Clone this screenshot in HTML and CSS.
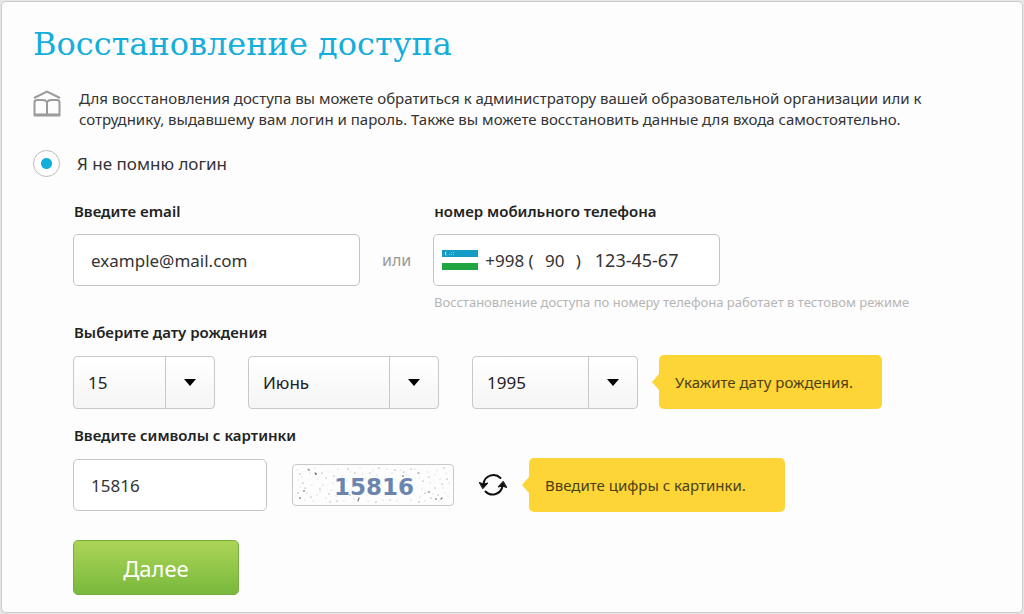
FILE: index.html
```html
<!DOCTYPE html>
<html lang="ru">
<head>
    <meta charset="UTF-8">
    <meta name="viewport" content="width=device-width, initial-scale=1.0">
    <title>Восстановление доступа</title>
    <link rel="stylesheet" href="styles.css">
</head>
<body>
    <main class="card">
        <h1>Восстановление доступа</h1>

        <div class="intro">
            <svg class="logo" viewBox="0 0 28 28" fill="none" stroke="#999b9d" stroke-width="2">
                <path d="M1 8L14 1.500L27 8"/>
                <path d="M14 12Q12.500 10 10 10H4Q1.500 10 1.500 12.500V26M14 12Q15.500 10 18 10h6q2.500 0 2.500 2.500V26M14 12V26"/>
                <path d="M1 25H27" stroke-width="3"/>
            </svg>
            <p>Для восстановления доступа вы можете обратиться к администратору вашей образовательной организации или к сотруднику, выдавшему вам логин и пароль. Также вы можете восстановить данные для входа самостоятельно.</p>
        </div>

        <form>
            <label class="choice">
                <input type="radio" name="reason" checked>
                Я не помню логин
            </label>

            <div class="fields">
                <div class="row contacts">
                    <div class="field">
                        <label class="title" for="email">Введите email</label>
                        <input class="box email" type="email" id="email" value="example@mail.com">
                    </div>
                    <span class="or">или</span>
                    <div class="field">
                        <label class="title" for="phone">номер мобильного телефона</label>
                        <div class="box phone">
                            <svg class="flag" viewBox="0 0 36 20">
                                <path fill="#fff" d="M0 0h36v20H0z"/>
                                <path fill="#169ac6" d="M0 0h36v7H0z"/>
                                <path fill="#1fa640" d="M0 13h36v7H0z"/>
                                <path fill="#d9f2fb" d="M5 1.500a2 2 0 1 0 0 4a2.400 2.400 0 0 1 0-4z"/>
                                <path fill="#7cc8e2" d="M7 4h1v1H7zM9 2h1v1H9zM9 4h1v1H9zM11 2h1v1h-1zM11 4h1v1h-1z"/>
                            </svg>
                            <span>+998 (</span>
                            <input class="code" type="text" aria-label="Код оператора" value="90">
                            <span>)</span>
                            <input class="number" type="tel" id="phone" value="123-45-67">
                        </div>
                    </div>
                </div>
                <p class="hint">Восстановление доступа по номеру телефона работает в тестовом режиме</p>

                <label class="title" for="day">Выберите дату рождения</label>
                <div class="row dates">
                    <div class="select day">
                        <select id="day"><option>15</option></select>
                        <span class="arrow"></span>
                    </div>
                    <div class="select month">
                        <select aria-label="Месяц"><option>Июнь</option></select>
                        <span class="arrow"></span>
                    </div>
                    <div class="select year">
                        <select aria-label="Год"><option>1995</option></select>
                        <span class="arrow"></span>
                    </div>
                    <div class="tip">Укажите дату рождения.</div>
                </div>

                <label class="title" for="captcha">Введите символы с картинки</label>
                <div class="row check">
                    <input class="box answer" type="text" id="captcha" value="15816">
                    <svg class="captcha" viewBox="0 0 160 40">
                        <g fill="none" stroke-linecap="round">
                            <path stroke="#b9bbbd" stroke-width="1" d="M4 5h0M9 12h0M7 22h0M3 31h0M12 35h0M17 8h0M22 3h0M25 14h0M19 20h0M27 27h0M33 33h0M35 7h0M40 18h0M38 25h0M45 4h0M49 11h0M51 36h0M57 7h0M61 34h0M67 3h0M70 9h0M75 36h0M80 5h0M84 10h0M90 35h0M94 4h0M99 8h0M104 36h0M108 5h0M113 10h0M118 35h0M122 4h0M126 13h0M129 24h0M127 32h0M134 7h0M137 18h0M140 29h0M144 5h0M147 14h0M150 23h0M146 36h0M153 8h0M156 18h0M155 31h0M14 28h0M30 20h0M43 31h0M54 16h0M63 15h0M88 20h0M132 36h0M20 36h0M152 28h0M5 15h0M24 30h0M72 14h0M106 18h0M142 10h0"/>
                            <path stroke="#77797c" stroke-width="1.200" d="M15 4h0M22 8l1 1M29 8h0M5 28h0M10 18h0M18 32h0M33 13h0M37 37h0M41 11h0M48 22h0M44 36h0M55 4h0M62 8h0M66 33l-1 3M77 8h0M86 3h0M97 35h0M102 5h0M111 7h0M118 4h0M125 8l1 0M130 16h0M136 12h0M142 23h0M138 33h0M148 34l1-1M145 30h0M151 3h0M154 14h0M132 28h0M27 24h0M12 23h0M57 30h0M126 37h0M149 19h0M36 29h0M7 9h0M83 37h0"/>
                            <path stroke="#4d4f52" stroke-width="1.600" d="M16 5h0M23 9h0M11 26h0M7 33h0M110 11h0M143 34h0M136 27h0"/>
                        </g>
                        <text x="81" y="30" text-anchor="middle">15816</text>
                    </svg>
                    <button class="refresh" type="button" aria-label="Обновить картинку">
                        <svg viewBox="0 0 28 28" fill="none" stroke="#111" stroke-width="2" stroke-linecap="round" stroke-linejoin="round">
                            <path d="M21.500 7A10 10 0 0 0 4.500 13"/>
                            <path d="M6.500 20.500A10 10 0 0 0 23.500 15"/>
                            <path fill="#111" stroke-width="1" d="M.5 11.500L4.500 13L9 12L4 17.500zM27.500 16.500L23.500 15L19 16L24 10.500z"/>
                        </svg>
                    </button>
                    <div class="tip">Введите цифры с картинки.</div>
                </div>

                <button class="next" type="submit">Далее</button>
            </div>
        </form>
    </main>
</body>
</html>
```
FILE: styles.css
```css
*{
    box-sizing: border-box;
}
body{
    margin: 0;
    padding: 1px;
    background-color: #e6e6e6;
    font-family: "Noto Sans", "Open Sans", sans-serif;
    font-size: 17px;
    color: #333;
}
.card{
    padding: 20px 32px 17px 31px;
    background-color: #fdfdfd;
    border: 1px solid #ccc;
    border-radius: 5px;
}
h1{
    margin: 0 0 22px;
    font-family: "DejaVu Serif", serif;
    font-size: 32px;
    font-weight: normal;
    line-height: 44px;
    color: #14aedb;
}
p{
    margin: 0;
}
.intro{
    display: flex;
    align-items: center;
    gap: 18px;
    font-size: 15px;
    line-height: 21px;
}
.intro p{
    max-width: 860px;
}
.logo{
    flex: none;
    width: 28px;
    height: 28px;
    margin-bottom: 10px;
}
.choice{
    display: flex;
    align-items: center;
    gap: 17px;
    margin: 20px 0 24px;
}
.choice input{
    appearance: none;
    width: 27px;
    height: 27px;
    margin: 0;
    border: 1px solid #bbb;
    border-radius: 50%;
    background: #fff;
}
.choice input:checked{
    background: radial-gradient(circle, #14aedb 5px, #fff 6px);
}
.fields{
    padding-left: 40px;
}
.row{
    display: flex;
    align-items: center;
}
.title{
    display: block;
    margin-bottom: 13px;
    padding-left: 1px;
    font-size: 15px;
    font-weight: 600;
    line-height: 20px;
    color: #222;
}
.contacts{
    align-items: flex-end;
    gap: 22px;
}
.or{
    line-height: 52px;
    font-size: 16px;
    color: #999;
}
.box{
    display: block;
    height: 52px;
    padding: 0 17px;
    border: 1px solid #c4c4c4;
    border-radius: 5px;
    background: #fff;
    font: inherit;
    color: #333;
}
.email, .phone{
    width: 287px;
}
.phone{
    display: flex;
    align-items: center;
    padding: 0 8px;
}
.phone input{
    padding: 0;
    border: none;
    background: none;
    font: inherit;
    color: inherit;
}
.phone .code{
    width: 42px;
    text-align: center;
}
.phone .number{
    width: 100px;
    margin-left: 14px;
    font-size: 18px;
}
.flag{
    width: 36px;
    height: 20px;
    margin-right: 7px;
}
.hint{
    margin: 6px 0 10px 361px;
    font-size: 13px;
    line-height: 20px;
    color: #b5b5b5;
}
.dates{
    gap: 33px;
    margin-bottom: 16px;
}
.select{
    position: relative;
}
.select select{
    appearance: none;
    display: block;
    width: 100%;
    height: 53px;
    padding: 0 60px 0 14px;
    border: 1px solid #c4c9c9;
    border-radius: 4px;
    background: linear-gradient(#fff, #f5f5f5);
    font: inherit;
    color: #222;
}
.day{
    width: 142px;
}
.month{
    width: 191px;
}
.year{
    width: 166px;
}
.arrow{
    position: absolute;
    top: 1px;
    right: 1px;
    bottom: 1px;
    width: 49px;
    border-left: 1px solid #c4c9c9;
    pointer-events: none;
}
.arrow::after{
    content: "";
    position: absolute;
    top: 50%;
    left: 50%;
    margin: -3px -6px;
    border: 6px solid transparent;
    border-top: 7px solid #000;
    border-bottom: none;
}
.tip{
    position: relative;
    padding: 0 16px;
    border-radius: 5px;
    background-color: #fdd537;
    font-size: 15px;
    line-height: 54px;
    color: #4a4018;
}
.tip::before{
    content: "";
    position: absolute;
    top: 50%;
    left: -7px;
    margin-top: -8px;
    border: 8px solid transparent;
    border-left: none;
    border-right: 7px solid #fdd537;
}
.dates .tip{
    width: 223px;
    margin-left: -12px;
}
.check{
    gap: 25px;
    margin-bottom: 28px;
}
.check .tip{
    width: 256px;
    margin-left: -3px;
}
.answer{
    width: 194px;
}
.captcha{
    width: 162px;
    height: 42px;
    border: 1px solid #c9c9c9;
    border-radius: 4px;
}
.captcha text{
    font-family: "DejaVu Sans", sans-serif;
    font-size: 23px;
    font-weight: bold;
    fill: #6b85ae;
}
.refresh{
    width: 28px;
    height: 28px;
    padding: 0;
    border: none;
    background: none;
    cursor: pointer;
}
.refresh svg{
    display: block;
}
.next{
    display: block;
    width: 166px;
    height: 55px;
    padding: 0;
    border: 1px solid #76ad3c;
    border-radius: 5px;
    background: linear-gradient(#add457, #78b93d);
    font: inherit;
    font-size: 22px;
    color: #fff;
    cursor: pointer;
}
.next:hover{
    background: linear-gradient(#a3cb4c, #6dad33);
}
```
